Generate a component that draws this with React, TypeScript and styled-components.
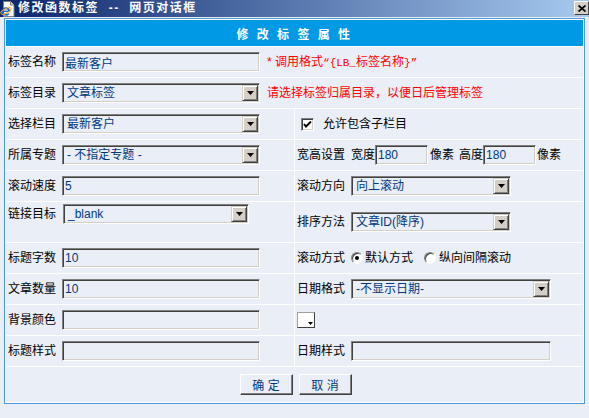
import React from 'react';
import styled, { createGlobalStyle } from 'styled-components';

const FONT = '"Liberation Sans", "Noto Sans CJK SC", sans-serif';

const GlobalStyle = createGlobalStyle`
  html, body {
    margin: 0;
    padding: 0;
    background: #eaeef6;
  }
  body {
    font-family: ${FONT};
    font-size: 12px;
  }
`;

const Window = styled.div`
  width: 589px;
  height: 418px;
  background: #eaeef6;
  overflow: hidden;
  display: flex;
  flex-direction: column;
`;

const TitleBar = styled.div`
  height: 17px;
  flex-shrink: 0;
  display: flex;
  align-items: center;
  background: linear-gradient(to right, #0a246a, #a6caf0);
`;

const TitleText = styled.span`
  color: #fff;
  font-weight: bold;
  font-size: 12px;
  line-height: 17px;
  margin-left: 2px;
  letter-spacing: 1.5px;
  white-space: pre;
`;

const CloseButton = styled.button`
  margin-left: auto;
  align-self: flex-start;
  margin-top: 1px;
  width: 15px;
  height: 14px;
  padding: 0;
  box-sizing: border-box;
  background: #d4d0c8;
  border: 1px solid;
  border-color: #fff #404040 #404040 #fff;
  display: flex;
  align-items: center;
  justify-content: center;
`;

const Body = styled.div`
  flex: 1;
  padding: 1px 4px 0 4px;
`;

const Table = styled.div`
  display: grid;
  grid-template-columns: 288px 288px;
  grid-template-rows: 26px repeat(5, 30px) 40px repeat(4, 30px) 35px;
  gap: 1px;
  padding: 1px;
  width: max-content;
  background: #fff;
  border: 1px solid #4a98e0;
`;

const HeaderCell = styled.div`
  grid-column: 1 / -1;
  background: #0099e6;
  color: #fff;
  font-weight: bold;
  font-size: 12px;
  letter-spacing: 2.5px;
  display: flex;
  align-items: center;
  justify-content: center;
  white-space: pre;
`;

const Cell = styled.div<{ $wide?: boolean; $top?: boolean; $center?: boolean }>`
  grid-column: ${(p) => (p.$wide ? '1 / -1' : 'auto')};
  display: flex;
  align-items: ${(p) => (p.$top ? 'flex-start' : 'center')};
  justify-content: ${(p) => (p.$center ? 'center' : 'flex-start')};
  padding: ${(p) => (p.$top ? '2px 0 0 2px' : '0 0 0 2px')};
  background: #eaeef6;
  color: #000;
  line-height: 14px;
  white-space: nowrap;
`;

const Label = styled.span`
  width: 48px;
  margin-right: 6px;
  line-height: 20px;
  flex-shrink: 0;
`;

const Text = styled.span<{ $ml?: number; $mr?: number }>`
  margin-left: ${(p) => p.$ml ?? 0}px;
  margin-right: ${(p) => p.$mr ?? 0}px;
  line-height: 20px;
`;

const TextBox = styled.input<{ $w: number }>`
  width: ${(p) => p.$w}px;
  height: 20px;
  box-sizing: border-box;
  margin: 0;
  padding: 0 0 0 2px;
  border: 1px solid;
  border-color: #808080 #fff #fff #808080;
  box-shadow: inset 1px 1px 0 #404040, inset -1px -1px 0 #d4d0c8;
  background: #eaeef6;
  font: 12px ${FONT};
  color: #003880;
  outline: none;
`;

const Select = styled.div<{ $w: number; $ml?: number }>`
  width: ${(p) => p.$w}px;
  height: 20px;
  margin-left: ${(p) => p.$ml ?? 0}px;
  box-sizing: border-box;
  display: flex;
  align-items: center;
  padding: 1px;
  border: 1px solid;
  border-color: #808080 #fff #fff #808080;
  box-shadow: inset 1px 1px 0 #404040, inset -1px -1px 0 #d4d0c8;
  background: #eaeef6;
`;

const SelectText = styled.span`
  flex: 1;
  padding-left: 3px;
  color: #003880;
  line-height: 16px;
  overflow: hidden;
`;

const DropButton = styled.span`
  width: 16px;
  height: 16px;
  box-sizing: border-box;
  background: #d4d0c8;
  border: 1px solid;
  border-color: #d4d0c8 #404040 #404040 #d4d0c8;
  box-shadow: inset 1px 1px 0 #fff, inset -1px -1px 0 #808080;
  display: flex;
  align-items: center;
  justify-content: center;
`;

const Hint = styled.span`
  color: #ff0000;
  margin-left: 7px;
  line-height: 20px;
`;

const HintCode = styled.span`
  font-family: "Liberation Mono", "Noto Sans CJK SC", monospace;
  font-size: 11px;
`;

const CheckBox = styled.span`
  width: 13px;
  height: 13px;
  box-sizing: border-box;
  margin: 0 9px 0 4px;
  border: 1px solid;
  border-color: #808080 #fff #fff #808080;
  box-shadow: inset 1px 1px 0 #404040, inset -1px -1px 0 #d4d0c8;
  background: #fff;
  display: flex;
  align-items: center;
  justify-content: center;
`;

const Radio = styled.span<{ $on?: boolean }>`
  width: 12px;
  height: 12px;
  box-sizing: border-box;
  margin-right: 2px;
  border-radius: 50%;
  border: 1px solid;
  border-color: #808080 #fff #fff #808080;
  box-shadow: inset 1px 1px 0 #404040;
  background: #fff;
  display: flex;
  align-items: center;
  justify-content: center;

  &::after {
    content: '';
    width: 4px;
    height: 4px;
    border-radius: 50%;
    background: ${(p) => (p.$on ? '#000' : 'transparent')};
  }
`;

const ColorBox = styled.span`
  width: 18px;
  height: 16px;
  box-sizing: border-box;
  border: 1px solid;
  border-color: #a0a0a0 #404040 #404040 #a0a0a0;
  background: #fff;
  display: flex;
  align-items: flex-end;
  justify-content: flex-end;
  padding: 0 1px 2px 0;
`;

const Button = styled.button`
  width: 53px;
  height: 21px;
  box-sizing: border-box;
  margin: 0 3px;
  padding: 0;
  background: #eaeef6;
  border: 1px solid;
  border-color: #fff #404040 #404040 #fff;
  box-shadow: inset -1px -1px 0 #808080;
  color: #003880;
  font: 12px ${FONT};
  white-space: pre;
`;

const Arrow = () => (
  <svg width="7" height="4" viewBox="0 0 7 4">
    <polygon points="0,0 7,0 3.5,4" fill="#000" />
  </svg>
);

const Dropdown = ({ w, ml, children }: { w: number; ml?: number; children: React.ReactNode }) => (
  <Select $w={w} $ml={ml}>
    <SelectText>{children}</SelectText>
    <DropButton>
      <Arrow />
    </DropButton>
  </Select>
);

const IeIcon = () => (
  <svg width="16" height="16" viewBox="0 0 16 16">
    <path d="M3.5 0.5h7l3.5 3.5v11.5h-10.5z" fill="#fff" stroke="#808080" />
    <path d="M10.5 0.5v3.5h3.5" fill="#dcdcdc" stroke="#808080" />
    <circle cx="6" cy="10.5" r="3.3" fill="none" stroke="#1a5fd0" strokeWidth="2" />
    <path d="M3.2 10.3h5.6" stroke="#1a5fd0" strokeWidth="1.4" />
    <rect x="6.5" y="11" width="3.5" height="1.6" fill="#fff" />
    <ellipse
      cx="6"
      cy="10"
      rx="5.6"
      ry="2.2"
      fill="none"
      stroke="#f2b01c"
      strokeWidth="1"
      transform="rotate(-28 6 10)"
    />
  </svg>
);

const CloseIcon = () => (
  <svg width="8" height="7" viewBox="0 0 8 7">
    <path d="M0.5 0.5L7.5 6.5M7.5 0.5L0.5 6.5" stroke="#000" strokeWidth="1.8" />
  </svg>
);

const CheckMark = () => (
  <svg width="9" height="7" viewBox="0 0 9 7">
    <polyline points="1,3 3,5.5 8,0.5" fill="none" stroke="#000" strokeWidth="2" />
  </svg>
);

const ColorArrow = () => (
  <svg width="5" height="3" viewBox="0 0 5 3">
    <polygon points="0,0 5,0 2.5,3" fill="#000" />
  </svg>
);

export default function App() {
  return (
    <>
      <GlobalStyle />
      <Window>
        <TitleBar>
          <IeIcon />
          <TitleText>修改函数标签  --  网页对话框</TitleText>
          <CloseButton type="button">
            <CloseIcon />
          </CloseButton>
        </TitleBar>
        <Body>
          <Table>
            <HeaderCell>修 改 标 签 属 性</HeaderCell>

            <Cell $wide>
              <Label>标签名称</Label>
              <TextBox $w={198} defaultValue="最新客户" />
              <Hint>
                * 调用格式<HintCode>“{'{'}LB_</HintCode>标签名称<HintCode>{'}'}”</HintCode>
              </Hint>
            </Cell>

            <Cell $wide>
              <Label>标签目录</Label>
              <Dropdown w={198}>文章标签</Dropdown>
              <Hint>请选择标签归属目录，以便日后管理标签</Hint>
            </Cell>

            <Cell>
              <Label>选择栏目</Label>
              <Dropdown w={198}>最新客户</Dropdown>
            </Cell>
            <Cell>
              <CheckBox>
                <CheckMark />
              </CheckBox>
              <Text>允许包含子栏目</Text>
            </Cell>

            <Cell>
              <Label>所属专题</Label>
              <Dropdown w={198}>- 不指定专题 -</Dropdown>
            </Cell>
            <Cell>
              <Label>宽高设置</Label>
              <Text>宽度</Text>
              <TextBox $w={53} defaultValue="180" />
              <Text $ml={2} $mr={5}>像素</Text>
              <Text>高度</Text>
              <TextBox $w={53} defaultValue="180" />
              <Text $ml={1}>像素</Text>
            </Cell>

            <Cell>
              <Label>滚动速度</Label>
              <TextBox $w={198} defaultValue="5" />
            </Cell>
            <Cell>
              <Label>滚动方向</Label>
              <Dropdown w={160}>向上滚动</Dropdown>
            </Cell>

            <Cell $top>
              <Label>链接目标</Label>
              <Dropdown w={186} ml={1}>_blank</Dropdown>
            </Cell>
            <Cell>
              <Label>排序方法</Label>
              <Dropdown w={160}>文章ID(降序)</Dropdown>
            </Cell>

            <Cell>
              <Label>标题字数</Label>
              <TextBox $w={198} defaultValue="10" />
            </Cell>
            <Cell>
              <Label>滚动方式</Label>
              <Radio $on />
              <Text $mr={11}>默认方式</Text>
              <Radio />
              <Text $ml={1}>纵向间隔滚动</Text>
            </Cell>

            <Cell>
              <Label>文章数量</Label>
              <TextBox $w={198} defaultValue="10" />
            </Cell>
            <Cell>
              <Label>日期格式</Label>
              <Dropdown w={200}>-不显示日期-</Dropdown>
            </Cell>

            <Cell>
              <Label>背景颜色</Label>
              <TextBox $w={198} defaultValue="" />
            </Cell>
            <Cell>
              <ColorBox>
                <ColorArrow />
              </ColorBox>
            </Cell>

            <Cell>
              <Label>标题样式</Label>
              <TextBox $w={198} defaultValue="" />
            </Cell>
            <Cell>
              <Label>日期样式</Label>
              <TextBox $w={200} defaultValue="" />
            </Cell>

            <Cell $wide $center>
              <Button type="button">确 定</Button>
              <Button type="button">取 消</Button>
            </Cell>
          </Table>
        </Body>
      </Window>
    </>
  );
}
